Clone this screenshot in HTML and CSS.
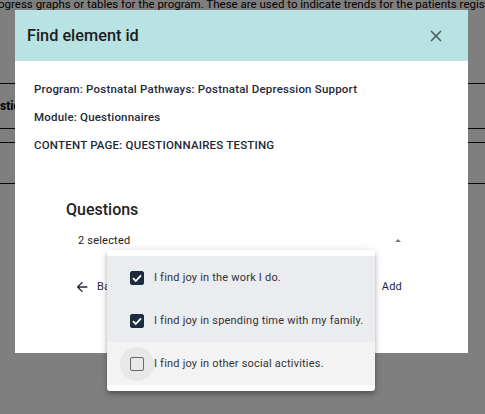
FILE: index.html
```html
<!DOCTYPE html>
<html>
<head>
<meta charset="utf-8">
<link rel="stylesheet" href="styles.css">
</head>
<body>
<div class="page">
  <p class="intro">ogress graphs or tables for the program. These are used to indicate trends for the patients registered</p>
  <div class="table">
    <div class="row head"><span>stic</span></div>
    <div class="row thin"></div>
    <div class="row"></div>
  </div>
</div>
<div class="overlay"></div>
<div class="dialog">
  <div class="dialog-head">
    <h2>Find element id</h2>
    <svg class="close" width="12" height="12" viewBox="0 0 12 12"><path d="M1 1L11 11M11 1L1 11" stroke="#4a5a5a" stroke-width="1.6" fill="none"/></svg>
  </div>
  <div class="dialog-body">
    <p class="info">Program: Postnatal Pathways: Postnatal Depression Support</p>
    <p class="info">Module: Questionnaires</p>
    <p class="info">CONTENT PAGE: QUESTIONNAIRES TESTING</p>
    <div class="questions">
      <h3>Questions</h3>
      <div class="select">
        <span>2 selected</span>
        <span class="arrow"></span>
      </div>
      <div class="actions">
        <div class="back">
          <svg width="16" height="16" viewBox="0 0 24 24"><path d="M20 11H7.83l5.59-5.59L12 4l-8 8 8 8 1.41-1.41L7.83 13H20v-2z" fill="#1f2937"/></svg>
          <span>Back</span>
        </div>
        <span class="add">Add</span>
      </div>
    </div>
  </div>
</div>
<div class="menu">
  <div class="option selected">
    <span class="box checked"><svg width="14" height="14" viewBox="0 0 14 14"><path d="M3 7.2L5.8 10L11 4.3" stroke="#fff" stroke-width="1.8" fill="none"/></svg></span>
    <span class="label">I find joy in the work I do.</span>
  </div>
  <div class="option selected">
    <span class="box checked"><svg width="14" height="14" viewBox="0 0 14 14"><path d="M3 7.2L5.8 10L11 4.3" stroke="#fff" stroke-width="1.8" fill="none"/></svg></span>
    <span class="label">I find joy in spending time with my family.</span>
  </div>
  <div class="option hover">
    <span class="ripple"><span class="box"></span></span>
    <span class="label">I find joy in other social activities.</span>
  </div>
</div>
</body>
</html>
```
FILE: styles.css
```css
* { box-sizing: border-box; }
html, body { margin: 0; padding: 0; }
body {
  width: 485px;
  height: 414px;
  overflow: hidden;
  background: #fff;
  font-family: Roboto, "Liberation Sans", sans-serif;
  position: relative;
}
.intro {
  margin: -4px 0 0 -2px;
  font-size: 11.5px;
  line-height: 16px;
  white-space: nowrap;
  color: #000;
}
.table { margin-top: 71px; }
.row { border-top: 1px solid #111; }
.row.head { height: 45px; display: flex; align-items: center; font-weight: 700; font-size: 12px; color: #000; }
.row.thin { height: 14px; }
.row:last-child { height: 42px; border-bottom: 1px solid #111; }
.overlay {
  position: absolute;
  inset: 0;
  background: rgba(0,0,0,0.5);
}
.dialog {
  position: absolute;
  left: 15px;
  top: 10px;
  width: 453px;
  height: 343px;
  background: #fff;
}
.dialog-head {
  height: 51px;
  background: #b9e2e2;
  display: flex;
  align-items: center;
  justify-content: space-between;
  padding: 0 26px 0 12px;
}
.dialog-head h2 {
  margin: 0;
  font-size: 16.3px;
  font-weight: 500;
  color: #1c1c1c;
}
.close { display: block; }
.dialog-body { padding: 21px 19px 0 19px; }
.info {
  margin: 0 0 14.2px;
  font-size: 11.5px;
  letter-spacing: 0.2px;
  line-height: 14px;
  font-weight: 500;
  color: #1f2937;
}
.questions { padding: 33px 44px 0 32px; }
.questions h3 {
  margin: 0;
  font-size: 16px;
  font-weight: 500;
  color: #222;
  line-height: 20px;
}
.select {
  display: flex;
  justify-content: space-between;
  align-items: center;
  padding: 14px 0 0 12px;
  font-size: 11px;
  letter-spacing: 0.2px;
  color: #222;
  line-height: 14px;
}
.arrow {
  width: 0; height: 0;
  border-left: 3.5px solid transparent;
  border-right: 3.5px solid transparent;
  border-bottom: 3.5px solid #777;
  margin-right: 4px;
}
.actions {
  display: flex;
  justify-content: space-between;
  align-items: center;
  padding: 31px 3px 0 8px;
  font-size: 11px;
  letter-spacing: 0.2px;
  color: #1f2937;
}
.back { display: flex; align-items: center; gap: 7px; }
.back svg { display: block; }
.menu {
  position: absolute;
  left: 107px;
  top: 250px;
  width: 268px;
  padding: 6px 0;
  background: #fff;
  border-radius: 3px;
  box-shadow: 0 2px 4px -1px rgba(0,0,0,.2), 0 4px 5px 0 rgba(0,0,0,.14), 0 1px 10px 0 rgba(0,0,0,.12);
}
.option {
  height: 43px;
  display: flex;
  align-items: center;
  padding-left: 23px;
  font-size: 11px;
  letter-spacing: 0.2px;
  color: #333;
}
.option.selected { background: #ebecef; }
.option.hover { background: #f3f3f4; }
.box {
  width: 14px;
  height: 14px;
  border: 1.5px solid #6a6a6a;
  border-radius: 2px;
  display: inline-flex;
  align-items: center;
  justify-content: center;
  flex: none;
}
.box.checked { background: #1d2b40; border-color: #1d2b40; }
.box svg { display: block; flex: none; }
.ripple {
  width: 34px; height: 34px;
  margin-left: -10px;
  margin-right: -10px;
  border-radius: 50%;
  background: #e8e8ea;
  display: flex;
  align-items: center;
  justify-content: center;
  flex: none;
}
.label { margin-left: 10px; }
```
